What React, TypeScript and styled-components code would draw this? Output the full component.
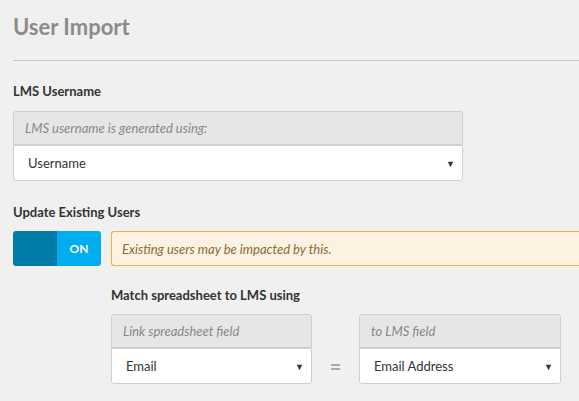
import React from "react";
import styled, { createGlobalStyle } from "styled-components";

const Global = createGlobalStyle`
  body { margin: 0; background: #f0f0f0; font-family: Lato, "Open Sans", sans-serif; overflow: hidden; }
`;
const Page = styled.div`padding: 0 0 0 13px; width: 566px;`;
const Title = styled.h1`margin: 0; padding-top: 13px; height: 61px; font-size: 22px; font-weight: 700; color: #8b8b8b; border-bottom: 1px solid #c8c8c8; box-sizing: border-box;`;
const Label = styled.div<{ $top: number }>`margin-top: ${p => p.$top}px; font-size: 13px; font-weight: 700; color: #333; height: 18px;`;
const Field = styled.div<{ $w: number; $top?: number }>`width: ${p => p.$w}px; margin-top: ${p => p.$top ?? 0}px; display: flex; flex-direction: column;`;
const Hint = styled.div`height: 34px; box-sizing: border-box; border: 1px solid #cfcfcf; border-radius: 3px 3px 0 0; background: #e6e6e6; color: #888; font-style: italic; font-size: 13px; display: flex; align-items: center; padding-left: 11px;`;
const Select = styled.div`height: 36px; box-sizing: border-box; border: 1px solid #cfcfcf; border-radius: 0 0 3px 3px; background: #fff; color: #333; font-size: 13px; display: flex; align-items: center; justify-content: space-between; padding: 0 7px 0 14px;`;
const Arrow = styled.span`font-size: 9px; color: #333;`;
const Row = styled.div`display: flex; align-items: center; gap: 10px; margin-top: 9px;`;
const Toggle = styled.div`width: 88px; height: 35px; border-radius: 3px; overflow: hidden; display: flex;`;
const Dark = styled.div`width: 44px; background: #007ca8;`;
const On = styled.div`flex: 1; background: #00adee; color: #fff; font-weight: 700; font-size: 12px; display: flex; align-items: center; justify-content: center;`;
const Warn = styled.div`flex: 1; height: 35px; box-sizing: border-box; background: #fcf2e2; border: 1px solid #f0b13c; border-right: none; border-radius: 3px 0 0 3px; color: #8a6a35; font-style: italic; font-size: 13px; display: flex; align-items: center; padding-left: 10px;`;
const Sub = styled.div`padding-left: 98px;`;
const Pair = styled.div`display: flex; align-items: flex-end; margin-top: 9px;`;
const Eq = styled.div`width: 47px; height: 36px; display: flex; align-items: center; justify-content: center; color: #aaa; font-size: 20px; font-weight: 700;`;

export default function App() {
  return (
    <Page>
      <Global />
      <Title>User Import</Title>
      <Label $top={22}>LMS Username</Label>
      <Field $w={450} $top={10}>
        <Hint>LMS username is generated using:</Hint>
        <Select>Username<Arrow>▼</Arrow></Select>
      </Field>
      <Label $top={23}>Update Existing Users</Label>
      <Row>
        <Toggle><Dark /><On>ON</On></Toggle>
        <Warn>Existing users may be impacted by this.</Warn>
      </Row>
      <Sub>
        <Label $top={21}>Match spreadsheet to LMS using</Label>
        <Pair>
          <Field $w={201}>
            <Hint>Link spreadsheet field</Hint>
            <Select>Email<Arrow>▼</Arrow></Select>
          </Field>
          <Eq>=</Eq>
          <Field $w={202}>
            <Hint>to LMS field</Hint>
            <Select>Email Address<Arrow>▼</Arrow></Select>
          </Field>
        </Pair>
      </Sub>
    </Page>
  );
}
